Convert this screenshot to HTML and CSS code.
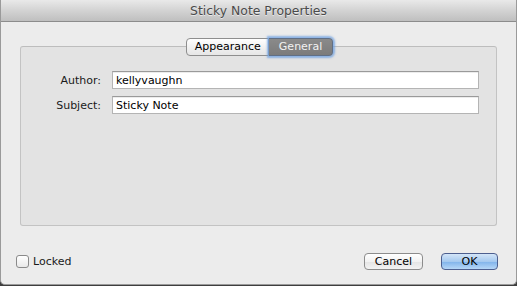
FILE: index.html
```html
<!DOCTYPE html>
<html lang="en">
<head>
    <meta charset="UTF-8">
    <title>Sticky Note Properties</title>
    <link rel="stylesheet" href="styles.css">
</head>
<body>
    <div class="window">
        <div class="titlebar">Sticky Note Properties</div>

        <div class="content">
            <!-- Tabs -->
            <div class="tabs">
                <span class="tab">Appearance</span>
                <span class="tab selected">General</span>
            </div>

            <div class="tab-box">
                <div class="form-row">
                    <label for="author">Author:</label>
                    <input type="text" id="author" value="kellyvaughn">
                </div>
                <div class="form-row">
                    <label for="subject">Subject:</label>
                    <input type="text" id="subject" value="Sticky Note">
                </div>
            </div>

            <!-- Bottom bar -->
            <div class="bottom-bar">
                <label class="locked"><span class="checkbox"></span>Locked</label>
                <div class="buttons">
                    <button class="btn">Cancel</button>
                    <button class="btn btn-default">OK</button>
                </div>
            </div>
        </div>
    </div>
</body>
</html>
```

FILE: styles.css
```css
body {
    margin: 0;
    background: #3e3e3e;
    font-family: 'DejaVu Sans', sans-serif;
    font-size: 11px;
    color: #000;
}

.window {
    width: 515px;
    height: 284px;
    background-color: #ececec;
    border: 1px solid #9a9a9a;
    border-top: none;
    border-radius: 0 0 5px 5px;
    display: flex;
    flex-direction: column;
    overflow: hidden;
}

.titlebar {
    height: 21px;
    line-height: 22px;
    text-align: center;
    font-size: 12.4px;
    color: #4a4a4a;
    text-shadow: 0 1px 0 rgba(255, 255, 255, 0.6);
    background: linear-gradient(to bottom, #e9e9e9, #d3d3d3 50%, #bfbfbf);
    border-bottom: 1px solid #8c8c8c;
}

.content {
    flex: 1;
    display: flex;
    flex-direction: column;
    padding: 16px 18px 0 19px;
}

/* Segmented control sitting over the box border */
.tabs {
    display: flex;
    justify-content: center;
    margin-bottom: -10px;
    position: relative;
    z-index: 1;
    padding-left: 1px;
}

.tab {
    height: 16px;
    line-height: 16px;
    padding: 0 7px 0 8px;
    border: 1px solid #8e8e8e;
    background: linear-gradient(to bottom, #ffffff, #f1f1f1 50%, #e6e6e6);
    border-radius: 4px 0 0 4px;
}

.tab.selected {
    padding: 0 10px;
    color: #f2f2f2;
    background: linear-gradient(to bottom, #8a8a8a, #7b7b7b);
    border-color: #5f6f86;
    border-left: none;
    border-radius: 0 4px 4px 0;
    box-shadow: 0 0 2px 2px rgba(110, 160, 225, 0.75);
}

.tab-box {
    height: 154px;
    padding-top: 24px;
    margin-right: 1px;
    background-color: #e3e3e3;
    border: 1px solid #c3c3c3;
    border-top-color: #bdbdbd;
    border-radius: 3px;
    display: flex;
    flex-direction: column;
    gap: 7px;
}

.form-row {
    display: grid;
    grid-template-columns: 80px 367px;
    column-gap: 11px;
    align-items: center;
}

.form-row label {
    text-align: right;
    color: #1a1a1a;
}

.form-row input {
    height: 18px;
    box-sizing: border-box;
    margin: 0;
    padding: 0 3px;
    font-family: 'DejaVu Sans', sans-serif;
    font-size: 11px;
    color: #000;
    background: #fff;
    border: 1px solid #b4b4b4;
    border-top-color: #9a9a9a;
    box-shadow: inset 0 1px 0 #ececec;
    outline: none;
}

.bottom-bar {
    display: flex;
    justify-content: space-between;
    align-items: center;
    margin-top: 27px;
}

.locked {
    display: flex;
    align-items: center;
    gap: 4px;
    margin-left: -4px;
    color: #1a1a1a;
}

.checkbox {
    width: 11px;
    height: 11px;
    border: 1px solid #8a8a8a;
    border-radius: 3px;
    background: linear-gradient(to bottom, #ffffff, #e9e9e9);
}

.buttons {
    display: flex;
    gap: 18px;
}

.btn {
    height: 17px;
    padding: 0;
    font-family: 'DejaVu Sans', sans-serif;
    font-size: 11px;
    line-height: 15px;
    color: #000;
    width: 59px;
    border: 1px solid #8c8c8c;
    border-radius: 4px;
    background: linear-gradient(to bottom, #ffffff, #f2f2f2 50%, #e4e4e4 51%, #f3f3f3);
}

.btn-default {
    width: 57px;
    border-color: #4d5f8f;
    background: linear-gradient(to bottom, #d3e5f8, #a5c9ef 50%, #7fb2ea 51%, #b6d7f7);
}
```
